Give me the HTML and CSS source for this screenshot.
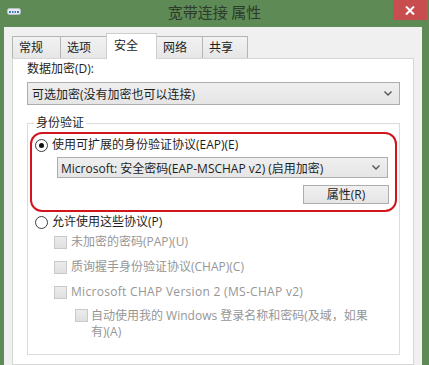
FILE: index.html
```html
<!DOCTYPE html>
<html lang="zh-CN">
<head>
<meta charset="utf-8">
<title>宽带连接 属性</title>
<link rel="stylesheet" href="styles.css">
</head>
<body>
<div class="window">
  <div class="titlebar">
    <div class="tb-left">
      <svg class="app-icon" width="14" height="8" viewBox="0 0 14 8">
        <rect x="0.5" y="1.5" width="13" height="6" rx="2" fill="#e8ecef" stroke="#b8c2c8"/>
        <rect x="2" y="4" width="10" height="2" fill="#3d7fc4"/>
        <rect x="4" y="4" width="1" height="2" fill="#e8ecef"/>
        <rect x="6.5" y="4" width="1" height="2" fill="#e8ecef"/>
        <rect x="9" y="4" width="1" height="2" fill="#e8ecef"/>
      </svg>
    </div>
    <div class="title">宽带连接 属性</div>
    <div class="tb-right">
      <div class="close">
        <svg width="10" height="9" viewBox="0 0 10 9"><path d="M1 0.5 L9 8.5 M9 0.5 L1 8.5" stroke="#fff" stroke-width="2"/></svg>
      </div>
    </div>
  </div>
  <div class="client">
    <div class="tabs">
      <div class="tab w49">常规</div>
      <div class="tab w47">选项</div>
      <div class="tab active w51">安全</div>
      <div class="tab w47">网络</div>
      <div class="tab w46">共享</div>
    </div>
    <div class="panel">
      <div class="label">数据加密(D):</div>
      <div class="select sel1">
        <span>可选加密(没有加密也可以连接)</span>
        <svg class="chev" width="8" height="5" viewBox="0 0 8 5"><path d="M0.5 0.5 L4 4 L7.5 0.5" fill="none" stroke="#555" stroke-width="1.4"/></svg>
      </div>
      <fieldset class="group">
        <legend>身份验证</legend>
        <div class="highlight">
          <div class="row radio-row">
            <span class="radio checked"></span>
            <span>使用可扩展的身份验证协议(EAP)(E)</span>
          </div>
          <div class="select sel2">
            <span>Microsoft: 安全密码(EAP-MSCHAP v2) (启用加密)</span>
            <svg class="chev" width="8" height="5" viewBox="0 0 8 5"><path d="M0.5 0.5 L4 4 L7.5 0.5" fill="none" stroke="#555" stroke-width="1.4"/></svg>
          </div>
          <div class="btn-row">
            <div class="button">属性(R)</div>
          </div>
        </div>
        <div class="row radio-row2">
          <span class="radio"></span>
          <span>允许使用这些协议(P)</span>
        </div>
        <div class="row check-row first">
          <span class="check"></span>
          <span class="disabled">未加密的密码(PAP)(U)</span>
        </div>
        <div class="row check-row">
          <span class="check"></span>
          <span class="disabled">质询握手身份验证协议(CHAP)(C)</span>
        </div>
        <div class="row check-row">
          <span class="check"></span>
          <span class="disabled latin">Microsoft CHAP Version 2 (MS-CHAP v2)</span>
        </div>
        <div class="row check-row sub">
          <span class="check"></span>
          <div class="disabled wrap">
            <div>自动使用我的 Windows 登录名称和密码(及域，如果</div>
            <div>有)(A)</div>
          </div>
        </div>
      </fieldset>
    </div>
  </div>
</div>
</body>
</html>
```
FILE: styles.css
```css
* { box-sizing: border-box; }
html, body { margin: 0; padding: 0; }
body {
  width: 429px;
  height: 365px;
  overflow: hidden;
  background: #5d8a55;
  font-family: "Open Sans", "Noto Sans CJK SC", sans-serif;
  font-size: 12px;
  color: #1e1e1e;
}
.window {
  display: flex;
  flex-direction: column;
  height: 365px;
}
.titlebar {
  height: 27px;
  display: grid;
  grid-template-columns: 1fr auto 1fr;
  flex: none;
}
.tb-left { padding: 7px 0 0 7px; }
.app-icon { display: block; }
.title {
  font-family: "Noto Sans CJK SC", sans-serif;
  font-size: 15px;
  line-height: 23px;
  color: #2e3a2b;
}
.tb-right { display: flex; justify-content: flex-end; padding-right: 2px; }
.close {
  width: 34px;
  height: 20px;
  background: #c74d4f;
  display: flex;
  align-items: center;
  justify-content: center;
}
.client {
  flex: 1;
  margin: 0 7px 0 4px;
  background: #f0f0f0;
  padding: 6px 8px 0 8px;
  display: flex;
  flex-direction: column;
}
.tabs {
  display: flex;
  align-items: flex-end;
  height: 25px;
  flex: none;
  position: relative;
  z-index: 1;
}
.tab {
  height: 22px;
  border: 1px solid #b5b5b5;
  border-bottom: none;
  background: linear-gradient(#f2f2f2, #e6e6e6);
  padding-left: 6px;
  line-height: 20px;
  margin-right: -1px;
  font-family: "Noto Sans CJK SC", sans-serif;
}
.tab.active {
  height: 26px;
  margin-bottom: -1px;
  background: #fff;
  border-color: #cfcfcf;
  padding-left: 7px;
  line-height: 22px;
  z-index: 2;
}
.w49 { width: 49px; }
.w47 { width: 47px; }
.w51 { width: 51px; }
.w46 { width: 46px; }
.panel {
  flex: 1;
  background: #fff;
  border: 1px solid #d6d6d6;
  padding: 2px 13px 0 14px;
}
.label { line-height: 16px; }
.select {
  display: flex;
  align-items: center;
  justify-content: space-between;
  border: 1px solid #adadad;
  background: linear-gradient(#efefef, #e5e5e5);
  padding: 0 7px 0 4px;
}
.sel1 { height: 23px; margin-top: 5px; }
.sel2 { height: 21px; margin: 4px 7px 0 22px; padding-left: 3px; }
.chev { display: block; }
.group {
  margin: 10px 0 0 0;
  padding: 0 0 14px 0;
  border: 1px solid #dcdcdc;
  min-inline-size: 0;
}
.group legend {
  margin-left: 6px;
  padding: 0 2px;
  line-height: 16px;
}
.highlight {
  margin: 1px 2px 0 2px;
  border: 2px solid #d0161c;
  border-radius: 12px;
  padding: 3px 0 6px 3px;
}
.row {
  display: flex;
  align-items: center;
  line-height: 16px;
}
.radio {
  width: 13px;
  height: 13px;
  border: 1px solid #3c3c3c;
  border-radius: 50%;
  background: #fff;
  margin-right: 4px;
  display: flex;
  align-items: center;
  justify-content: center;
  flex: none;
}
.radio.checked::after {
  content: "";
  width: 5px;
  height: 5px;
  border-radius: 50%;
  background: #111;
}
.btn-row {
  display: flex;
  justify-content: flex-end;
  margin-top: 7px;
  padding-right: 6px;
}
.button {
  width: 86px;
  height: 19px;
  border: 1px solid #adadad;
  background: linear-gradient(#f0f0f0, #e5e5e5);
  text-align: center;
  line-height: 17px;
}
.radio-row2 { margin-top: 2px; padding-left: 7px; }
.check-row { margin-top: 9px; padding-left: 26px; }
.check-row.first { margin-top: 4px; }
.check-row.sub { margin-top: 8px; padding-left: 47px; align-items: flex-start; }
.check {
  width: 13px;
  height: 13px;
  border: 1px solid #c9c9c9;
  background: linear-gradient(#ececec, #e0e0e0);
  margin-right: 4px;
  flex: none;
}
.check-row.sub .check { margin-top: 1px; margin-right: 3px; }
.disabled { color: #969696; }
.latin { letter-spacing: 0.3px; }
.wrap { line-height: 16px; white-space: nowrap; }
```
